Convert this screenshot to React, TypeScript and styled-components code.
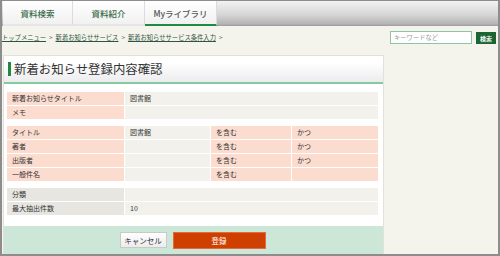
import React from "react";
import styled, { createGlobalStyle } from "styled-components";

const Global = createGlobalStyle`
  html, body { margin: 0; padding: 0; background: #f4f3ec; }
  body { font-family: "Noto Sans CJK JP", "Noto Sans", sans-serif; }
  * { box-sizing: border-box; }
`;

const Frame = styled.div`
  width: 500px;
  height: 256px;
  border: 2px solid #8d8d8d;
  border-top-width: 1px;
  background: #f4f3ec;
  display: flex;
  flex-direction: column;
  overflow: hidden;
`;

const TabBar = styled.div`
  height: 25px;
  flex: none;
  display: flex;
  padding-left: 1px;
  background: linear-gradient(#f2f2f2 0%, #d6d6d6 55%, #b4b4b4 92%, #9a9a9a 100%);
`;

const Tab = styled.div<{ $active?: boolean; $w: number }>`
  width: ${(p) => p.$w}px;
  flex: none;
  display: flex;
  align-items: center;
  justify-content: center;
  font-size: 8.5px;
  font-weight: 500;
  color: ${(p) => (p.$active ? "#555" : "#3a6a48")};
  background: linear-gradient(#ffffff, #f1f1f1);
  border-right: 1px solid #dcdcdc;
  border-bottom: 2px solid ${(p) => (p.$active ? "#1d8a45" : "#e6e6e6")};
`;

const TopRow = styled.div`
  height: 29px;
  flex: none;
  display: flex;
  align-items: flex-start;
  justify-content: space-between;
  padding: 0 2px 0 0;
`;

const Breadcrumb = styled.div`
  margin-top: 7px;
  font-size: 6.3px;
  color: #555;
  white-space: nowrap;
  display: flex;
  gap: 3px;
`;

const Crumb = styled.span`
  color: #2f5440;
  text-decoration: underline;
`;

const Search = styled.div`
  margin-top: 5px;
  display: flex;
  gap: 4px;
`;

const SearchInput = styled.div`
  width: 82px;
  height: 13px;
  border: 1px solid #8cc6a2;
  background: #fff;
  font-size: 6.3px;
  color: #999;
  padding-left: 3px;
  line-height: 11px;
`;

const SearchButton = styled.div`
  width: 20px;
  height: 12px;
  background: #1c6533;
  color: #fff;
  font-size: 6px;
  font-weight: 700;
  display: flex;
  align-items: center;
  justify-content: center;
  margin-top: 1px;
`;

const Main = styled.div`
  flex: 1;
  display: flex;
  padding-left: 1px;
`;

const Panel = styled.div`
  width: 381px;
  display: flex;
  flex-direction: column;
  background: #fff;
  border: 1px solid #e3e2d9;
  border-bottom: none;
`;

const Heading = styled.div`
  height: 28px;
  flex: none;
  display: flex;
  align-items: center;
  padding-left: 4px;
  gap: 3px;
  background: linear-gradient(#ffffff 25%, #ececef);
  border-bottom: 2px solid #86c9a1;
`;

const HeadBar = styled.span`
  width: 3px;
  height: 14px;
  background: #1f8a3d;
`;

const HeadText = styled.h1`
  margin: 0;
  font-size: 12.4px;
  font-weight: 400;
  color: #333;
  line-height: 14px;
`;

const Body = styled.div`
  padding: 8px 5px 0 3px;
  display: flex;
  flex-direction: column;
  gap: 7px;
`;

const Table = styled.div<{ $cols: string }>`
  display: grid;
  grid-template-columns: ${(p) => p.$cols};
  grid-auto-rows: 13px;
  gap: 1px;
  background: #fff;
`;

const Cell = styled.div<{ $kind: "pink" | "plain" | "dark" }>`
  font-size: 7px;
  line-height: 13px;
  padding-left: 5px;
  color: #333;
  white-space: nowrap;
  background: ${(p) =>
    p.$kind === "pink"
      ? "#fbdccf"
      : p.$kind === "dark"
      ? "#e7e6e0"
      : "#f2f1eb"};
`;

const Footer = styled.div`
  margin-top: auto;
  height: 28px;
  background: #cce7d7;
  display: flex;
  align-items: center;
  justify-content: center;
  gap: 6px;
  padding-right: 2px;
`;

const CancelButton = styled.div`
  width: 47px;
  height: 16px;
  border: 1px solid #c9c9c9;
  background: linear-gradient(#ffffff, #ececec);
  font-size: 7.5px;
  color: #333;
  display: flex;
  align-items: center;
  justify-content: center;
`;

const SubmitButton = styled.div`
  width: 93px;
  height: 17px;
  border: 1px solid #e36a3c;
  background: #cf4000;
  font-size: 7.5px;
  color: #fff;
  display: flex;
  align-items: center;
  justify-content: center;
`;

const criteria = [
  ["タイトル", "図書館", "を含む", "かつ"],
  ["著者", "", "を含む", "かつ"],
  ["出版者", "", "を含む", "かつ"],
  ["一般件名", "", "を含む", ""],
];

export default function App() {
  return (
    <>
      <Global />
      <Frame>
        <TabBar>
          <Tab $w={70}>資料検索</Tab>
          <Tab $w={72}>資料紹介</Tab>
          <Tab $w={72} $active>
            Myライブラリ
          </Tab>
        </TabBar>
        <TopRow>
          <Breadcrumb>
            <Crumb>トップメニュー</Crumb>&gt;
            <Crumb>新着お知らせサービス</Crumb>&gt;
            <Crumb>新着お知らせサービス条件入力</Crumb>&gt;
          </Breadcrumb>
          <Search>
            <SearchInput>キーワードなど</SearchInput>
            <SearchButton>検索</SearchButton>
          </Search>
        </TopRow>
        <Main>
          <Panel>
            <Heading>
              <HeadBar />
              <HeadText>新着お知らせ登録内容確認</HeadText>
            </Heading>
            <Body>
              <Table $cols="117px 1fr">
                <Cell $kind="pink">新着お知らせタイトル</Cell>
                <Cell $kind="plain">図書館</Cell>
                <Cell $kind="pink">メモ</Cell>
                <Cell $kind="plain"></Cell>
              </Table>
              <Table $cols="117px 85px 80px 1fr">
                {criteria.map((r) => (
                  <React.Fragment key={r[0]}>
                    <Cell $kind="pink">{r[0]}</Cell>
                    <Cell $kind="plain">{r[1]}</Cell>
                    <Cell $kind="pink">{r[2]}</Cell>
                    <Cell $kind="pink">{r[3]}</Cell>
                  </React.Fragment>
                ))}
              </Table>
              <Table $cols="117px 1fr">
                <Cell $kind="dark">分類</Cell>
                <Cell $kind="plain"></Cell>
                <Cell $kind="dark">最大抽出件数</Cell>
                <Cell $kind="plain">10</Cell>
              </Table>
            </Body>
            <Footer>
              <CancelButton>キャンセル</CancelButton>
              <SubmitButton>登録</SubmitButton>
            </Footer>
          </Panel>
        </Main>
      </Frame>
    </>
  );
}
